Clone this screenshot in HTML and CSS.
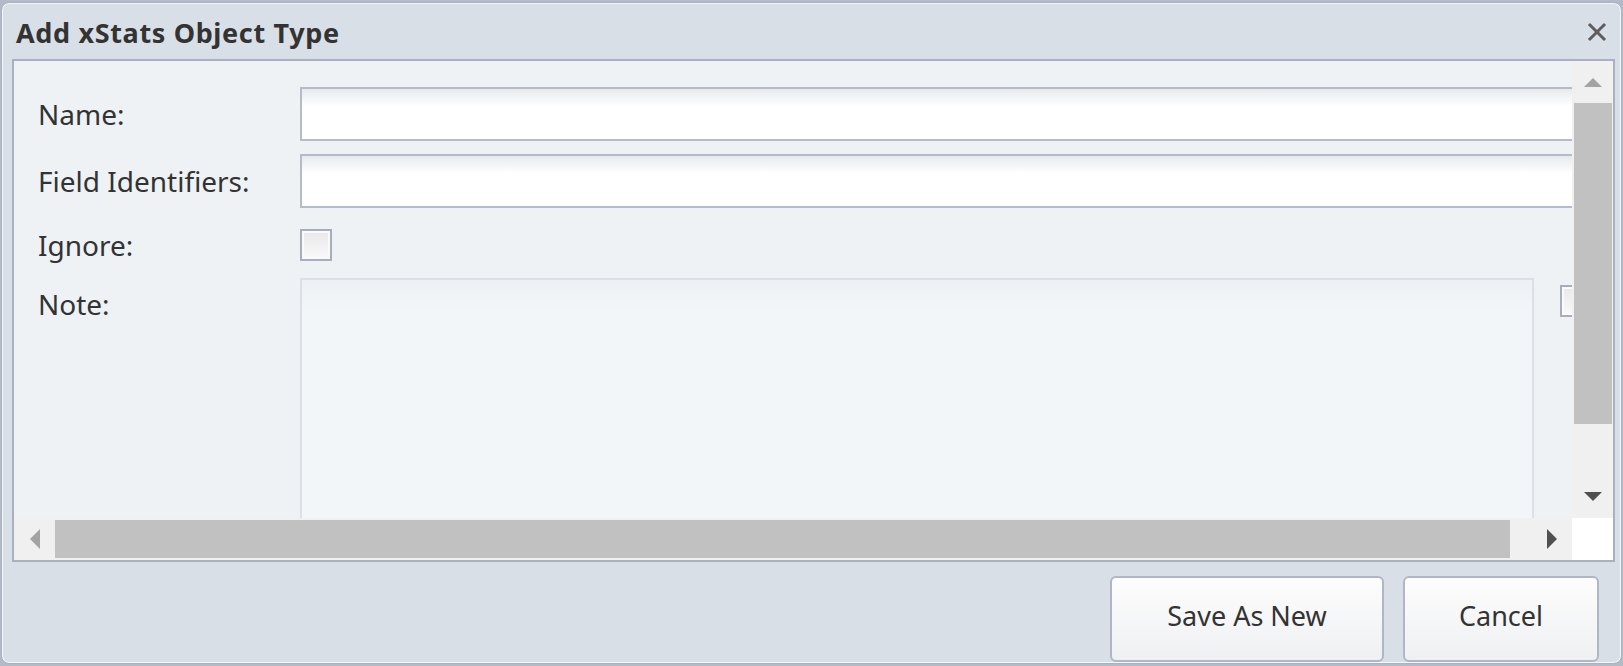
FILE: index.html
```html
<!DOCTYPE html>
<html lang="en">
<head>
  <meta charset="UTF-8">
  <title>Add xStats Object Type</title>
  <link rel="stylesheet" href="styles.css">
</head>
<body>
  <div class="window">
    <div class="titlebar">
      <span class="title">Add xStats Object Type</span>
      <svg class="close" width="20" height="20" viewBox="0 0 20 20">
        <path d="M3 3 L17 17 M17 3 L3 17" stroke="#5e5e5e" stroke-width="3" stroke-linecap="square"/>
      </svg>
    </div>

    <div class="panel">
      <div class="scroll-area">
        <div class="form">
          <div class="row">
            <label class="label">Name:</label>
            <input class="field" type="text">
          </div>
          <div class="row">
            <label class="label">Field Identifiers:</label>
            <input class="field" type="text">
          </div>
          <div class="row row-check">
            <label class="label">Ignore:</label>
            <span class="checkbox"></span>
          </div>
          <div class="row row-note">
            <label class="label">Note:</label>
            <div class="note"></div>
            <span class="checkbox small-check"></span>
          </div>
        </div>
      </div>
      <div class="vscroll">
        <div class="sbtn">
          <svg width="22" height="12" viewBox="0 0 22 12"><path d="M2 11 L11 2 L20 11 Z" fill="#a3a3a3"/></svg>
        </div>
        <div class="vthumb"></div>
        <div class="sbtn sbtn-end">
          <svg width="22" height="12" viewBox="0 0 22 12"><path d="M2 1 L11 10 L20 1 Z" fill="#505050"/></svg>
        </div>
      </div>
      <div class="hscroll">
        <div class="sbtn">
          <svg width="12" height="22" viewBox="0 0 12 22"><path d="M11 1 L1 11 L11 21 Z" fill="#a3a3a3"/></svg>
        </div>
        <div class="hthumb"></div>
        <div class="sbtn sbtn-end">
          <svg width="12" height="22" viewBox="0 0 12 22"><path d="M1 1 L11 11 L1 21 Z" fill="#505050"/></svg>
        </div>
      </div>
      <div class="corner"></div>
    </div>

    <div class="footer">
      <button class="btn btn-save">Save As New</button>
      <button class="btn btn-cancel">Cancel</button>
    </div>
  </div>
</body>
</html>
```

FILE: styles.css
```css
html, body {
  margin: 0;
  height: 100%;
}
body {
  background: #b4bac7;
  font-family: "Noto Sans", "Open Sans", sans-serif;
  color: #333;
  padding-top: 2px;
  box-sizing: border-box;
}
.window {
  margin: 0 1px;
  height: 662px;
  box-sizing: border-box;
  background: #d8dfe7;
  border: 1px solid #aab1c0;
  border-radius: 8px;
  box-shadow: inset 0 0 0 1px #f4f6f9;
  display: flex;
  flex-direction: column;
  overflow: hidden;
}
.titlebar {
  height: 56px;
  flex: none;
  display: flex;
  align-items: center;
  justify-content: space-between;
  padding: 0 14px 0 14px;
  box-sizing: border-box;
}
.title {
  font-weight: bold;
  font-size: 27px;
  color: #333;
  letter-spacing: 0.65px;
  padding-top: 2px;
}
.close {
  display: block;
  margin-top: 2px;
}
.panel {
  flex: none;
  margin: 0 6px 0 10px;
  height: 503px;
  border: 2px solid #a9b0bf;
  box-sizing: border-box;
  display: grid;
  grid-template-columns: 1fr 41px;
  grid-template-rows: 1fr 42px;
  background: #eef2f5;
}
.scroll-area {
  overflow: hidden;
  position: relative;
}
.form {
  padding: 26px 0 0 24px;
  display: flex;
  flex-direction: column;
  width: 1600px;
}
.row {
  display: flex;
  align-items: center;
  margin-bottom: 13px;
}
.label {
  width: 262px;
  flex: none;
  font-size: 28px;
  line-height: 32px;
  color: #333;
}
.field {
  width: 1300px;
  height: 54px;
  box-sizing: border-box;
  border: 2px solid #b7bacb;
  background: linear-gradient(#e7eaec, #fff 35%);
  margin: 0;
  padding: 0 8px;
  font: inherit;
}
.row-check {
  margin-top: 8px;
  margin-bottom: 17px;
}
.checkbox {
  display: block;
  width: 32px;
  height: 32px;
  box-sizing: border-box;
  border: 2px solid #a9adbd;
  background: linear-gradient(#e8e8e8, #f9f9f9);
  box-shadow: inset 0 0 0 2px #fafafa;
}
.row-note {
  align-items: flex-start;
}
.row-note .label {
  padding-top: 10px;
}
.note {
  width: 1234px;
  height: 300px;
  box-sizing: border-box;
  border: 2px solid #dce0e6;
  background: linear-gradient(#edf1f4, #f3f6f9 30px);
  flex: none;
}
.small-check {
  margin-left: 26px;
  margin-top: 7px;
  flex: none;
}
.vscroll {
  background: #f0f0f0;
  display: flex;
  flex-direction: column;
  align-items: center;
}
.hscroll {
  background: #f0f0f0;
  display: flex;
  align-items: center;
}
.sbtn {
  width: 41px;
  height: 42px;
  flex: none;
  display: flex;
  align-items: center;
  justify-content: center;
}
.sbtn-end {
  margin-top: auto;
}
.hscroll .sbtn-end {
  margin-top: 0;
  margin-left: auto;
}
.sbtn svg {
  display: block;
}
.vthumb {
  width: 38px;
  height: 321px;
  background: #c1c1c1;
}
.hthumb {
  width: 1455px;
  height: 38px;
  background: #c1c1c1;
}
.corner {
  background: #fff;
}
.footer {
  flex: 1;
  display: flex;
  justify-content: flex-end;
  align-items: flex-start;
  gap: 19px;
  padding: 14px 22px 0 0;
  overflow: hidden;
}
.btn {
  height: 86px;
  box-sizing: border-box;
  border: 2px solid #b1b6c4;
  border-radius: 6px;
  background: linear-gradient(#fdfdfd, #eff0f2);
  font-family: inherit;
  font-size: 27px;
  color: #333;
  padding: 0 0 8px;
  flex: none;
}
.btn-save {
  width: 274px;
}
.btn-cancel {
  width: 196px;
}
```
